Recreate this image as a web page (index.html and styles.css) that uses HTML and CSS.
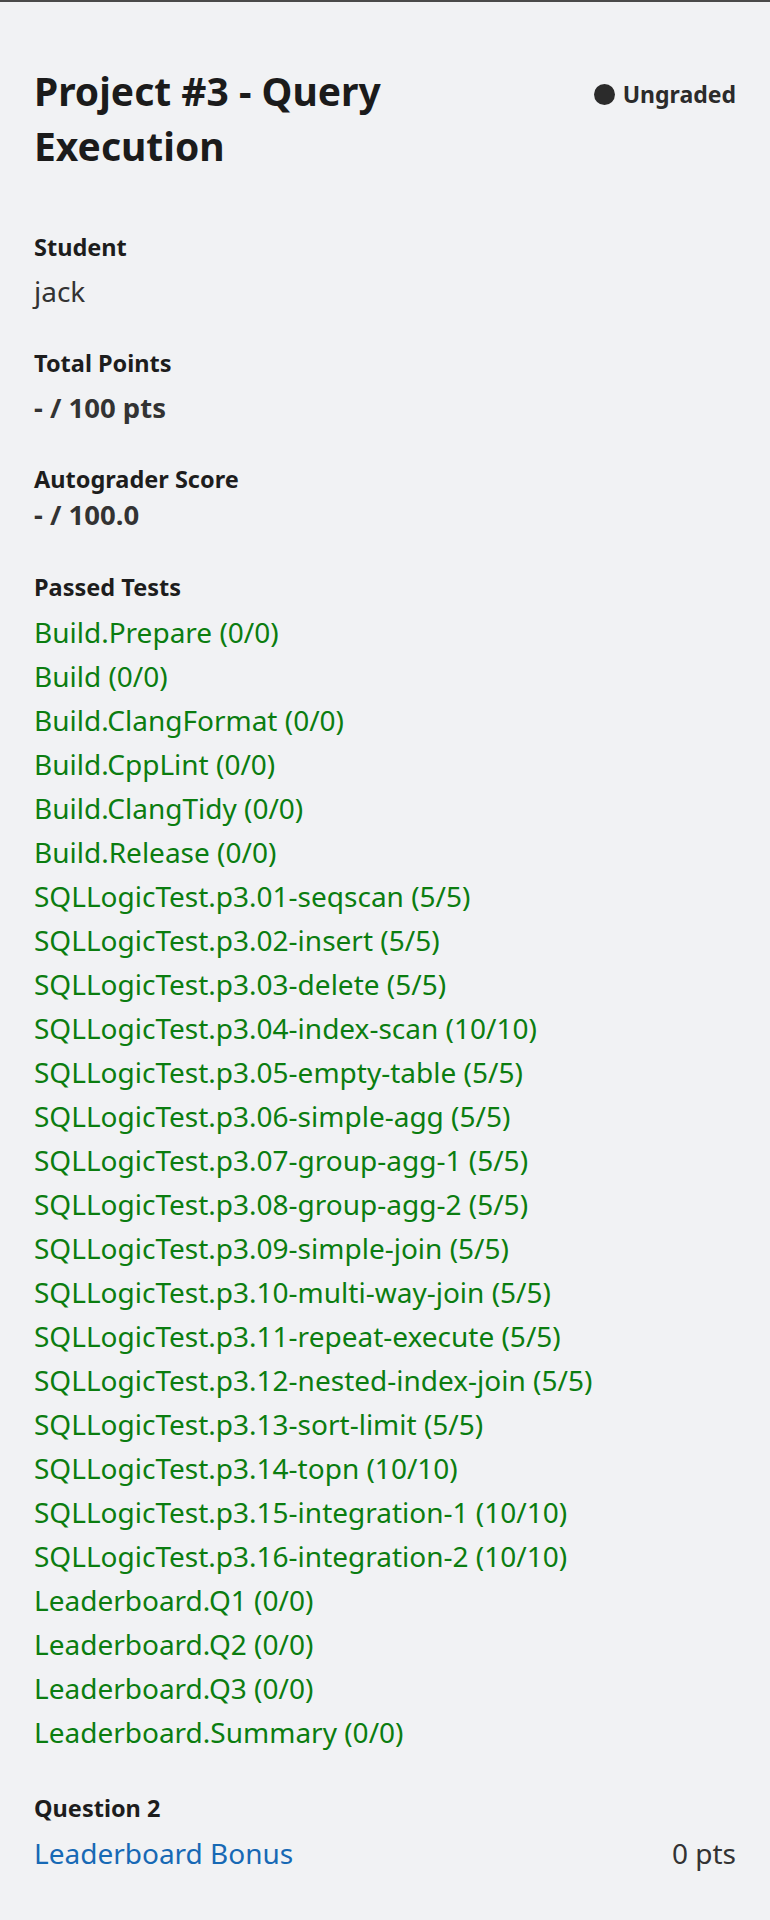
FILE: index.html
```html
<!DOCTYPE html>
<html lang="en">
<head>
<meta charset="utf-8">
<title>Project #3 - Query Execution</title>
<link rel="stylesheet" href="styles.css">
</head>
<body>
<main class="outline">
  <header class="outline-header">
    <h1 class="title">Project #3 - Query Execution</h1>
    <div class="status"><span class="status-dot"></span>Ungraded</div>
  </header>

  <section class="field field-student">
    <div class="label">Student</div>
    <div class="value">jack</div>
  </section>

  <section class="field field-total">
    <div class="label">Total Points</div>
    <div class="value value-bold">- / 100 pts</div>
  </section>

  <section class="field field-auto">
    <div class="label">Autograder Score</div>
    <div class="value value-bold value-tight">- / 100.0</div>
  </section>

  <section class="field field-tests">
    <div class="label">Passed Tests</div>
    <ul class="tests">
      <li>Build.Prepare (0/0)</li>
      <li>Build (0/0)</li>
      <li>Build.ClangFormat (0/0)</li>
      <li>Build.CppLint (0/0)</li>
      <li>Build.ClangTidy (0/0)</li>
      <li>Build.Release (0/0)</li>
      <li>SQLLogicTest.p3.01-seqscan (5/5)</li>
      <li>SQLLogicTest.p3.02-insert (5/5)</li>
      <li>SQLLogicTest.p3.03-delete (5/5)</li>
      <li>SQLLogicTest.p3.04-index-scan (10/10)</li>
      <li>SQLLogicTest.p3.05-empty-table (5/5)</li>
      <li>SQLLogicTest.p3.06-simple-agg (5/5)</li>
      <li>SQLLogicTest.p3.07-group-agg-1 (5/5)</li>
      <li>SQLLogicTest.p3.08-group-agg-2 (5/5)</li>
      <li>SQLLogicTest.p3.09-simple-join (5/5)</li>
      <li>SQLLogicTest.p3.10-multi-way-join (5/5)</li>
      <li>SQLLogicTest.p3.11-repeat-execute (5/5)</li>
      <li>SQLLogicTest.p3.12-nested-index-join (5/5)</li>
      <li>SQLLogicTest.p3.13-sort-limit (5/5)</li>
      <li>SQLLogicTest.p3.14-topn (10/10)</li>
      <li>SQLLogicTest.p3.15-integration-1 (10/10)</li>
      <li>SQLLogicTest.p3.16-integration-2 (10/10)</li>
      <li>Leaderboard.Q1 (0/0)</li>
      <li>Leaderboard.Q2 (0/0)</li>
      <li>Leaderboard.Q3 (0/0)</li>
      <li>Leaderboard.Summary (0/0)</li>
    </ul>
  </section>

  <section class="field field-question">
    <div class="label">Question 2</div>
    <div class="question-row">
      <a class="question-link" href="#">Leaderboard Bonus</a>
      <span class="question-points">0 pts</span>
    </div>
  </section>
</main>
</body>
</html>
```

FILE: styles.css
```css
html, body {
  margin: 0;
  padding: 0;
}

body {
  background: #f1f2f4;
  border-top: 2px solid #4a4a4a;
  font-family: "Noto Sans", "Open Sans", sans-serif;
  color: #333333;
  min-height: 1918px;
}

.outline {
  padding: 61px 34px 0 34px;
}

.outline-header {
  display: flex;
  justify-content: space-between;
  align-items: flex-start;
  gap: 24px;
}

.title {
  margin: 0;
  font-size: 39px;
  line-height: 55px;
  font-weight: 700;
  color: #1b1b1b;
  max-width: 420px;
}

.status {
  display: flex;
  align-items: center;
  gap: 8px;
  margin-top: 17px;
  font-size: 23px;
  line-height: 28px;
  font-weight: 700;
  color: #2b2b2b;
  white-space: nowrap;
}

.status-dot {
  width: 21px;
  height: 21px;
  border-radius: 50%;
  background: #2b2b2b;
}

.label {
  font-size: 23.5px;
  line-height: 34px;
  font-weight: 700;
  color: #1d1d1d;
}

.value {
  margin-top: 5px;
  font-size: 28px;
  line-height: 44px;
  color: #333333;
}

.value-bold {
  font-weight: 700;
  font-size: 27.5px;
}

.field-total .value {
  margin-top: 6px;
}

.value-tight {
  margin-top: -1px;
  line-height: 40px;
}

.field-student {
  margin-top: 57px;
}

.field-total {
  margin-top: 33px;
}

.field-auto {
  margin-top: 32px;
}

.field-tests {
  margin-top: 35px;
}

.tests {
  list-style: none;
  margin: 6px 0 0 0;
  padding: 0;
}

.tests li {
  font-size: 28px;
  line-height: 44px;
  color: #0b7d10;
}

.field-question {
  margin-top: 37px;
}

.question-row {
  display: flex;
  justify-content: space-between;
  align-items: baseline;
  margin-top: 6px;
  font-size: 28px;
  line-height: 44px;
}

.question-link {
  color: #1769b5;
  text-decoration: none;
}

.question-points {
  color: #333333;
}
```
